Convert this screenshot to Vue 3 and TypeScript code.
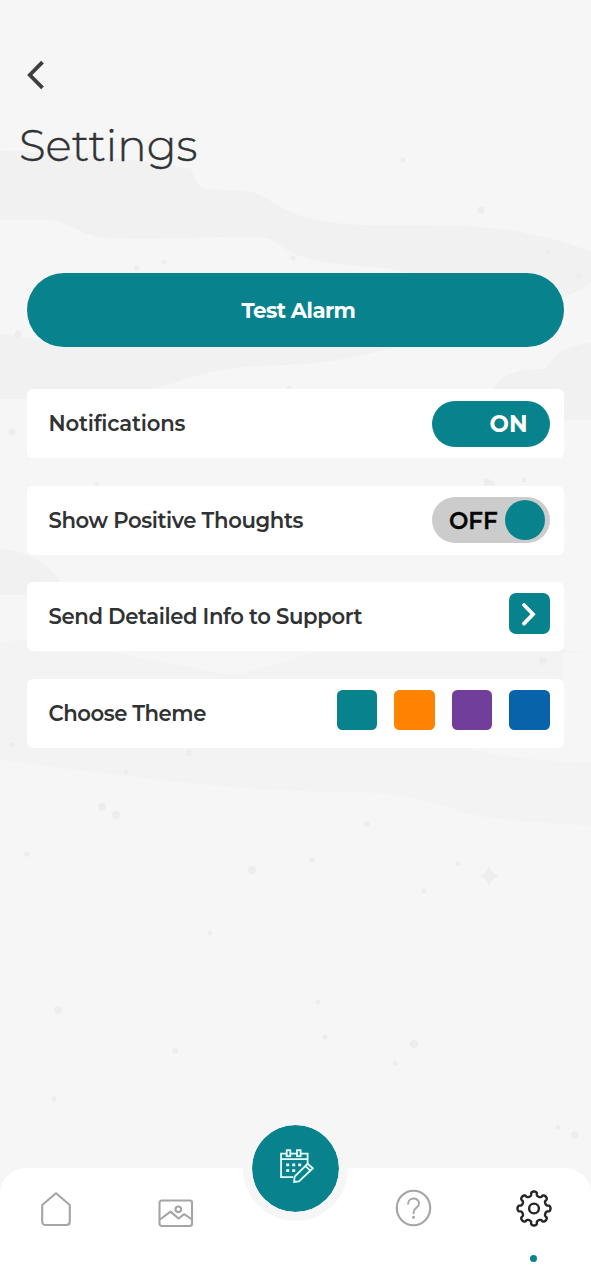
<script setup lang="ts">
import { ref } from 'vue'

interface Dot { x: number; y: number; r: number }

const notifications = ref(true)
const positiveThoughts = ref(false)
const themes = ['#08838d', '#ff8200', '#713f9b', '#0963ab']

const raw: number[][] = [
  [403, 160, 2.5], [481, 210, 3.5], [548, 252, 2.5], [579, 276, 3.5], [137, 268, 2.8],
  [164, 262, 2.2], [293, 258, 2.5], [18, 334, 3.5], [289, 388, 2.5], [12, 432, 3.5],
  [97, 484, 2], [487, 482, 3.5], [492, 484, 3], [524, 480, 2.5], [543, 661, 4], [12, 745, 2.8],
  [189, 753, 3], [126, 772, 2.5], [102, 807, 4], [116, 815, 4], [367, 824, 3],
  [27, 854, 2.8], [252, 870, 4], [312, 860, 3], [458, 864, 2.4], [424, 891, 2.6],
  [210, 933, 2.4], [318, 1002, 2.6], [58, 1010, 4], [325, 1037, 2.5], [414, 1044, 4.2],
  [175, 1051, 2.8], [395, 1063, 2.5], [54, 1099, 2.5], [558, 1127, 2.6], [575, 1135, 3.8],
]
const dots: Dot[] = raw.map(([x, y, r]) => ({ x, y, r }))

function gearPath(): string {
  const points: string[] = []
  for (let i = 0; i < 240; i++) {
    const t = (i / 240) * Math.PI * 2
    const r = 14.4 + 2.1 * Math.cos(8 * t)
    const a = t + 0.05 * Math.sin(16 * t)
    points.push(`${(18 + r * Math.sin(a)).toFixed(2)} ${(18.5 - r * 1.03 * Math.cos(a)).toFixed(2)}`)
  }
  return `M${points.join('L')}Z`
}
const gear = gearPath()
</script>

<template>
  <div class="screen">
    <svg class="backdrop" viewBox="0 0 591 1280" aria-hidden="true">
      <path class="wave" d="M0 151C60 152 130 158 191 169C195 177 197 188 207 189C230 191 248 187 266 198C290 214 309 223 365 225C430 226 483 223 530 234C555 239 577 246 591 252V283C577 292 563 298 550 302L385 268C345 266 310 262 290 252C278 245 273 237 258 237C210 235 150 242 99 237C76 233 67 220 48 220H0Z" />
      <path class="wave" d="M0 334C28 335 50 344 75 346H400C355 357 331 363 285 365C210 366 190 379 155 389C120 399 60 399 0 399Z" />
      <path class="wave" d="M591 343C568 345 554 353 546 369C519 369 504 372 491 392L563 420H591Z" />
      <path class="wave" d="M0 549C25 550 51 564 61 583L26 595H0Z" />
      <path class="wave faint" d="M0 642C50 635 120 655 230 675C270 669 320 648 390 630L591 653V653H563V700L460 747C500 757 545 762 591 763V826C540 822 490 821 460 811C430 801 397 792 350 792C220 791 130 776 0 760Z" />
      <circle v-for="(d, i) in dots" :key="i" class="dot" :cx="d.x" :cy="d.y" :r="d.r" />
      <path class="dot" d="M489 865Q491 874 499 876Q491 878 489 887Q487 878 480 876Q487 874 489 865Z" />
    </svg>

    <header class="header">
      <button class="back" aria-label="Back">
        <svg width="20" height="32" viewBox="0 0 20 32"><path d="M16.5 3.2 3.8 16l12.7 12.8" /></svg>
      </button>
      <h1 class="title">Settings</h1>
    </header>

    <main class="content">
      <button class="alarm"><span>Test Alarm</span></button>
      <section class="list">
        <div class="card">
          <span class="label wide">Notifications</span>
          <button class="toggle on" @click="notifications = !notifications"><span>ON</span></button>
        </div>
        <div class="card">
          <span class="label">Show Positive Thoughts</span>
          <button class="toggle off" @click="positiveThoughts = !positiveThoughts"><span class="off-text">OFF</span><i class="knob"></i></button>
        </div>
        <div class="card">
          <span class="label raised">Send Detailed Info to Support</span>
          <button class="go" aria-label="Send">
            <svg width="41" height="41" viewBox="0 0 41 41"><path d="m15 12 9 9.3-9 9.3" /></svg>
          </button>
        </div>
        <div class="card">
          <span class="label tight">Choose Theme</span>
          <div class="swatches">
            <button v-for="c in themes" :key="c" class="swatch" :style="{ background: c }"></button>
          </div>
        </div>
      </section>
    </main>

    <nav class="nav">
      <a class="item home">
        <svg width="32" height="36" viewBox="0 0 32 36"><path d="M16 2.2 29.8 14V30.5Q29.8 34 26.3 34H5.7Q2.2 34 2.2 30.5V14Z" /></svg>
      </a>
      <a class="item picture">
        <svg width="36" height="29" viewBox="0 0 36 29"><rect x="1.5" y="1.5" width="32.5" height="25.5" rx="2.2" /><circle cx="20.3" cy="10.3" r="2.8" /><path d="M2 20.5 12.5 12.6 20.6 19.5 26.2 15.2 34 20.5" /></svg>
      </a>
      <a class="item help">
        <svg width="37" height="38" viewBox="0 0 37 38"><ellipse cx="18.5" cy="19" rx="16.7" ry="17.3" /><path class="thin" d="M13.1 14.8C13.1 7.9 24 7.7 24 14.6C24 19.1 18.6 18.2 18.6 24.2" /><circle class="point" cx="18.5" cy="28.3" r="1.5" /></svg>
      </a>
      <a class="item gear">
        <svg width="36" height="37" viewBox="0 0 36 37"><path :d="gear" /><circle cx="18" cy="18.5" r="4.9" /></svg>
        <i class="active-dot"></i>
      </a>
      <button class="fab" aria-label="Calendar">
        <svg width="36" height="36" viewBox="0 0 36 36">
          <path d="M7.5 5.6H2.1V29.2H14M11.5 5.6H17.2M21.8 5.6H28.6V16.8M2.1 11.2H28.6" />
          <rect x="7.7" y="2.2" width="3.6" height="6" /><rect x="18" y="2.2" width="3.6" height="6" />
          <path d="m15.6 28.6 13-12.8 5.3 4.4-14 13.1-4.8.6ZM26.5 18.2l5.1 4.6" />
          <path class="cells" d="M7.2 16.8h3M13.2 16.8h3M19.2 16.8h3M7.2 22.6h3M13.2 22.6h3" />
        </svg>
      </button>
    </nav>
  </div>
</template>

<style>
body { margin: 0; background: #f6f6f6; }
</style>

<style scoped>
.screen { position: relative; display: flex; flex-direction: column; box-sizing: border-box; width: 591px; height: 1280px; overflow: hidden; background: #f6f6f6; color: #303233; font-family: Montserrat, Inter, "Open Sans", sans-serif; }
button { padding: 0; border: 0; font: inherit; color: inherit; }
svg { display: block; fill: none; stroke: currentColor; }
.backdrop { position: absolute; inset: 0; width: 591px; height: 1280px; stroke: none; }
.wave { fill: #f1f1f1; }
.wave.faint { fill: #f3f3f3; }
.dot { fill: #ededed; }
.header { position: relative; height: 273px; box-sizing: border-box; padding: 58.5px 0 0 26px; }
.back { display: block; background: none; color: #3e3e3e; }
.back svg { stroke-width: 3.8; }
.title { margin: 29.5px 0 0 -7px; font-size: 43.7px; line-height: 52px; font-weight: 300; -webkit-text-stroke: .4px currentColor; white-space: nowrap; }
.content { position: relative; padding: 0 27.5px 0 26.5px; }
.alarm { display: flex; align-items: center; justify-content: center; box-sizing: border-box; width: 100%; height: 73.5px; padding-left: 7px; border-radius: 37px; background: #08838d; color: #fff; font-size: 21.3px; font-weight: 700; letter-spacing: -.55px; }
.list { display: flex; flex-direction: column; gap: 27.5px; margin-top: 42.5px; }
.card { display: flex; align-items: center; justify-content: space-between; box-sizing: border-box; height: 69px; padding: 0 14px 0 22px; border-radius: 6px; background: #fff; }
.label { font-size: 21.2px; font-weight: 600; line-height: 28px; letter-spacing: -.38px; white-space: nowrap; }
.label.wide { margin-bottom: 2px; letter-spacing: -.2px; }
.label.raised { margin-bottom: 2px; }
.label.tight { margin-bottom: 1px; letter-spacing: -.47px; }
.toggle { display: flex; align-items: center; box-sizing: border-box; width: 118px; height: 46px; border-radius: 23px; font-size: 23px; }
.on { justify-content: flex-end; padding-right: 22px; background: #08838d; color: #fff; font-weight: 700; }
.off { justify-content: space-between; padding: 0 5px 0 17.5px; background: #ccc; color: #050505; font-weight: 600; }
.off-text { margin-top: 2px; -webkit-text-stroke: .3px currentColor; }
.knob { width: 40px; height: 40px; border-radius: 50%; background: #08838d; }
.go { width: 40.5px; height: 41px; margin-bottom: 6px; border-radius: 7px; background: #08838d; color: #fff; }
.go svg { stroke-width: 3.8; stroke-linecap: round; }
.swatches { display: flex; gap: 17px; margin-bottom: 6px; }
.swatch { width: 40.5px; height: 40.5px; border-radius: 5.5px; }
.nav { position: relative; display: flex; justify-content: space-between; box-sizing: border-box; height: 112px; margin-top: auto; padding: 22px 39px 0 40px; border-radius: 26px 26px 0 0; background: #fff; color: #a5a5a5; }
.item svg { stroke-width: 2.1; stroke-linejoin: round; }
.home { margin-top: 1px; }
.picture { margin: 9px 101px 0 0; }
.help { margin: -1px -2px 0 15px; }
.help .thin { stroke-width: 1.9; stroke-linecap: round; }
.help .point { fill: currentColor; stroke: none; }
.gear { color: #252525; }
.gear svg { stroke-width: 2.4; }
.active-dot { display: block; width: 7px; height: 7px; margin: 28px auto 0; border-radius: 50%; background: #08838d; }
.fab { position: absolute; left: 243px; top: -52px; display: grid; place-items: center; width: 105px; height: 105px; border: 9px solid #f6f6f6; border-radius: 50%; background: #08838d; background-clip: padding-box; color: #e9ffff; }
.fab svg { margin: -6px 0 0 2px; stroke-width: 1.8; }
.fab .cells { stroke-width: 2.8; }
</style>
